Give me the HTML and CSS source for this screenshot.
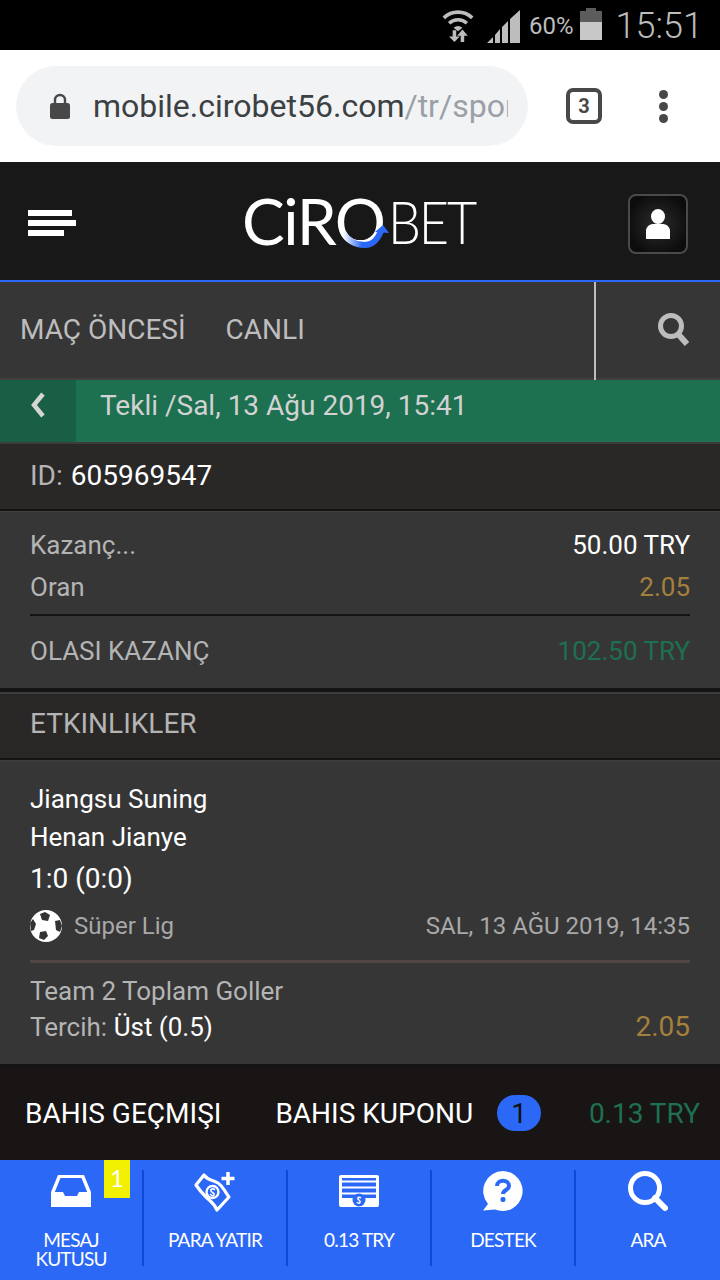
FILE: index.html
```html
<!DOCTYPE html>
<html lang="tr">
<head>
<meta charset="utf-8">
<title>Cirobet</title>
<link rel="stylesheet" href="styles.css">
</head>
<body>
<div class="phone">
  <div class="status">
    <svg class="st-wifi" width="32" height="34" viewBox="0 0 36 38">
      <path d="M2 11 A23 23 0 0 1 34 11" fill="none" stroke="#bdbdbd" stroke-width="4"/>
      <path d="M8 17 A15 15 0 0 1 28 17" fill="none" stroke="#bdbdbd" stroke-width="4"/>
      <path d="M13 22 A8 8 0 0 1 23 22 L18 26Z" fill="#bdbdbd"/>
      <path d="M12 25H16V32H20L14 38 8 32H12Z" fill="#bdbdbd"/>
      <path d="M21 38H25V31H29L23 24 17 31H21Z" fill="#bdbdbd"/>
    </svg>
    <svg class="st-signal" width="33" height="33" viewBox="0 0 33 33">
      <path d="M0 33 6 27V33ZM8 33V25L13 19V33ZM15 33V17L21 11V33ZM23 33V9L33 0V33Z" fill="#bdbdbd"/>
    </svg>
    <span class="st-pct">60%</span>
    <div class="st-batt"><div class="st-batt-cap"></div><div class="st-batt-empty"></div><div class="st-batt-fill"></div></div>
    <span class="st-time">15:51</span>
  </div>

  <div class="chrome">
    <div class="urlbar">
      <svg class="lock" width="20" height="26" viewBox="0 0 20 26">
        <path d="M5 11V7a5 5 0 0 1 10 0v4" fill="none" stroke="#484848" stroke-width="2.4"/>
        <rect x="0" y="10" width="20" height="16" rx="2.5" fill="#484848"/>
      </svg>
      <div class="url"><span class="url-host">mobile.cirobet56.com</span><span class="url-path">/tr/spor</span></div>
    </div>
    <div class="tabcount">3</div>
    <div class="dots"><i></i><i></i><i></i></div>
  </div>

  <header class="head">
    <div class="burger"><i class="b1"></i><i class="b2"></i><i class="b3"></i></div>
    <div class="logo">
      <span class="logo-text">CiRO</span><span class="logo-text logo-bet">BET</span>
      <svg class="logo-arc" width="54" height="32" viewBox="0 0 54 32">
        <defs><linearGradient id="arcg" x1="0" x2="1" y1="0" y2="0"><stop offset="0" stop-color="#ffffff"/><stop offset=".5" stop-color="#2b68f6"/></linearGradient></defs>
        <path d="M5 14 C10 24 18 27 27 27 C34 27 39 23 43 13" fill="none" stroke="url(#arcg)" stroke-width="6"/>
        <path d="M37 14 45 7 51 15Z" fill="#2b68f6"/>
      </svg>
    </div>
    <button class="userbtn">
      <svg width="24" height="30" viewBox="0 0 24 30"><ellipse cx="12" cy="7.5" rx="7" ry="7.5" fill="#fff"/><path d="M0 30V21a7 7 0 0 1 7-6h10a7 7 0 0 1 7 6v9Z" fill="#fff"/></svg>
    </button>
  </header>

  <nav class="nav">
    <div class="nav-links"><span>MAÇ ÖNCESİ</span><span>CANLI</span></div>
    <div class="nav-search">
      <svg width="32" height="34" viewBox="0 0 32 34"><circle cx="13" cy="13" r="10.5" fill="none" stroke="#bdbdbd" stroke-width="5"/><path d="M20 21 29 31" stroke="#bdbdbd" stroke-width="6"/></svg>
    </div>
  </nav>

  <div class="greenbar">
    <div class="back"><svg width="16" height="26" viewBox="0 0 16 26"><path d="M13 2 4 13 13 24" fill="none" stroke="#d5d5d5" stroke-width="4.5"/></svg></div>
    <div class="greentext">Tekli /Sal, 13 Ağu 2019, 15:41</div>
  </div>

  <div class="idrow">ID: <b>605969547</b></div>

  <section class="summary">
    <div class="row r-win"><span>Kazanç...</span><span class="white">50.00 TRY</span></div>
    <div class="row r-odd"><span>Oran</span><span class="gold">2.05</span></div>
    <div class="row r-pot"><span>OLASI KAZANÇ</span><span class="green">102.50 TRY</span></div>
  </section>

  <div class="etk">ETKINLIKLER</div>

  <section class="event">
    <div class="team t1">Jiangsu Suning</div>
    <div class="team t2">Henan Jianye</div>
    <div class="team t3">1:0 (0:0)</div>
    <div class="league">
      <div class="league-l">
        <svg width="32" height="32" viewBox="0 0 32 32">
          <circle cx="16" cy="16" r="16" fill="#fff"/>
          <path d="M10 4 15 2 20 5 18 11 12 10Z" fill="#333"/>
          <path d="M10 22 16 21 18 26 14 30 9 28Z" fill="#333"/>
          <path d="M25 11 30 10 32 16 30 22 26 20Z" fill="#333"/>
          <path d="M0 13 3 9 6 14 4 20 1 21Z" fill="#333"/>
        </svg>
        <span>Süper Lig</span>
      </div>
      <span class="league-date">SAL, 13 AĞU 2019, 14:35</span>
    </div>
    <div class="divider"></div>
    <div class="market">Team 2 Toplam Goller</div>
    <div class="pick"><span>Tercih: <b>Üst (0.5)</b></span><span class="gold pick-odd">2.05</span></div>
  </section>

  <div class="betbar">
    <span class="bb-hist">BAHIS GEÇMIŞI</span>
    <span class="bb-slip">BAHIS KUPONU</span>
    <span class="bb-count">1</span>
    <span class="bb-bal">0.13 TRY</span>
  </div>

  <footer class="tabs">
    <div class="tab">
      <span class="badge">1</span>
      <svg class="ic" width="40" height="42" viewBox="0 0 40 42"><path fill-rule="evenodd" d="M7 4H33L40 21V36H0V21ZM9.500 7 3.800 21H12L14 25H26L28 21H36.200L30.500 7Z" fill="#fff"/></svg>
      <span class="lbl">MESAJ<br>KUTUSU</span>
    </div>
    <div class="tab">
      <svg class="ic" width="42" height="42" viewBox="0 0 42 42">
        <path d="M2 14 10 4C14 10 18 8 24 12S30 20 35 26L23 39C20 32 16 30 12 26S6 20 2 14Z" fill="none" stroke="#fff" stroke-width="3.200" stroke-linejoin="round"/>
        <circle cx="18.500" cy="21" r="6" fill="none" stroke="#fff" stroke-width="2.400"/>
        <path d="M21 19C19 17 16 18 17 20S21 22 20 24 17 24 16 23" fill="none" stroke="#fff" stroke-width="1.600"/>
        <path d="M34 1V14M27.500 7.500H40.500" stroke="#fff" stroke-width="3.500"/>
      </svg>
      <span class="lbl">PARA YATIR</span>
    </div>
    <div class="tab">
      <svg class="ic" width="40" height="42" viewBox="0 0 40 42">
        <rect x="0" y="4" width="40" height="32" rx="2" fill="#fff"/>
        <rect x="3" y="7" width="34" height="20" fill="#2b68f6"/>
        <path d="M3 10.500H37M3 16.500H37M3 22.500H37" stroke="#fff" stroke-width="1.800"/>
        <circle cx="20" cy="29" r="6.500" fill="#2b68f6"/>
        <path d="M22 27C20 25.500 18 26.500 19 28S22 30 21 31.500 18.500 32 18 31" fill="none" stroke="#fff" stroke-width="1.400"/>
      </svg>
      <span class="lbl">0.13 TRY</span>
    </div>
    <div class="tab">
      <svg class="ic" width="40" height="42" viewBox="0 0 40 42">
        <path d="M20 0A20 20 0 1 1 12 38.500L0 39.500L5 33A20 20 0 0 1 20 0Z" fill="#fff"/>
        <path d="M14 15C14 8 26 8 26 15C26 19 20 19 20 23" fill="none" stroke="#2b68f6" stroke-width="4"/>
        <rect x="17.500" y="26" width="5" height="5" rx="2" fill="#2b68f6"/>
      </svg>
      <span class="lbl">DESTEK</span>
    </div>
    <div class="tab">
      <svg class="ic" width="40" height="42" viewBox="0 0 40 42"><circle cx="17" cy="17" r="14.500" fill="none" stroke="#fff" stroke-width="5"/><path d="M27 27 37 37" stroke="#fff" stroke-width="6" stroke-linecap="round"/></svg>
      <span class="lbl">ARA</span>
    </div>
  </footer>
</div>
</body>
</html>
```

FILE: styles.css
```css
* { box-sizing: border-box; }
html, body { margin: 0; padding: 0; }
body { background: #363636; font-family: Roboto, "Liberation Sans", sans-serif; }
.phone { width: 720px; height: 1280px; overflow: hidden; display: flex; flex-direction: column; }

.status { height: 50px; background: #000; display: flex; align-items: center; justify-content: flex-end; padding-right: 17px; flex: none; color: #bdbdbd; }
.st-wifi { margin-right: 13px; }
.st-signal { margin-right: 9px; margin-top: 3px; }
.st-pct { font-size: 24px; margin-right: 6px; margin-top: 2px; }
.st-batt { width: 22px; height: 32px; display: flex; flex-direction: column; align-items: center; margin-right: 14px; margin-bottom: 3px; }
.st-batt-cap { width: 10px; height: 3px; background: #5c5c5c; }
.st-batt-empty { width: 22px; height: 11px; background: #5c5c5c; }
.st-batt-fill { width: 22px; height: 18px; background: #c8c8c8; }
.st-time { font-size: 36px; font-weight: 300; margin-top: 1px; }

.chrome { height: 112px; background: #fff; display: flex; align-items: center; flex: none; padding: 0 0 0 16px; }
.urlbar { width: 512px; height: 80px; border-radius: 40px; background: #f1f3f4; display: flex; align-items: center; padding: 0 20px 0 34px; }
.lock { flex: none; margin-right: 23px; margin-top: -1px; }
.url { font-size: 32px; white-space: nowrap; overflow: hidden; flex: 1; }
.url-host { color: #3c4043; }
.url-path { color: #9aa0a6; }
.tabcount { width: 36px; height: 36px; margin-left: 38px; border: 4px solid #484848; border-radius: 7px; color: #484848; font-size: 20px; font-weight: 700; display: flex; align-items: center; justify-content: center; }
.dots { margin-left: 57px; display: flex; flex-direction: column; gap: 3px; }
.dots i { display: block; width: 9px; height: 9px; border-radius: 50%; background: #484848; }

.head { height: 120px; background: #181818; border-bottom: 2px solid #2b68f6; display: flex; align-items: center; justify-content: space-between; padding: 6px 32px 0 28px; flex: none; position: relative; }
.burger { display: flex; flex-direction: column; gap: 4px; margin-top: -2px; }
.burger i { display: block; height: 6px; background: #fff; }
.b1 { width: 44px; }
.b2 { width: 48px; }
.b3 { width: 36px; }
.logo { position: absolute; left: 242px; top: 26px; width: 236px; height: 66px; display: flex; align-items: center; font-family: Lato, sans-serif; font-weight: 400; color: #fff; }
.logo-text { font-size: 64px; line-height: 66px; letter-spacing: -1.5px; }
.logo-bet { font-size: 60px; font-weight: 300; letter-spacing: -2.5px; margin-left: 3px; display: inline-block; transform: scaleX(0.87); transform-origin: left center; }
.logo-arc { position: absolute; left: 96px; top: 30px; }
.userbtn { width: 60px; height: 60px; border: 2px solid #4a4a4a; border-radius: 8px; background: radial-gradient(circle, #2c2c2c 0, #0c0c0c 80%); display: flex; align-items: center; justify-content: center; padding: 0; }

.nav { height: 98px; background: #363636; border-bottom: 2px solid #41403f; display: flex; justify-content: space-between; flex: none; }
.nav-links { display: flex; align-items: center; gap: 40px; padding: 0 0 2px 20px; color: #bdbdbd; font-size: 28px; }
.nav-search { width: 126px; margin-bottom: -2px; border-left: 2px solid #bdbdbd; display: flex; align-items: center; justify-content: center; padding: 0 0 2px 32px; }

.greenbar { height: 64px; background: #1d7050; border-bottom: 2px solid #3c3c3c; display: flex; flex: none; }
.back { width: 76px; background: #195f45; display: flex; align-items: center; padding: 0 0 12px 30px; }
.greentext { padding: 0 0 12px 24px; font-size: 28px; color: #d2d2d2; display: flex; align-items: center; }

.idrow { height: 67px; background: #292827; border-bottom: 2px solid #141414; color: #b4b4b4; font-size: 28px; padding: 0 0 2px 30px; display: flex; align-items: center; gap: 1px; white-space: pre; flex: none; }
.idrow b { color: #fff; font-weight: 400; }

.summary { background: #363636; border-top: 1px solid #414141; border-bottom: 4px solid #141414; height: 181px; padding: 0 30px; flex: none; }
.row { display: flex; justify-content: space-between; color: #b4b4b4; font-size: 26px; line-height: 30px; }
.r-win { padding-top: 18px; }
.r-odd { padding-top: 12px; padding-bottom: 12px; border-bottom: 2px solid #141414; }
.r-pot { padding-top: 20px; }
.white { color: #fff; }
.gold { color: #a5803c; }
.green { color: #1d7050; }

.etk { height: 68px; background: #292827; border-top: 2px solid #3c3c3c; border-bottom: 2px solid #141414; color: #b4b4b4; font-size: 28px; padding: 0 0 6px 30px; display: flex; align-items: center; flex: none; }

.event { background: #363636; height: 308px; padding: 22px 30px 0; border-top: 2px solid #3c3c3c; border-bottom: 4px solid #141414; flex: none; }
.team { color: #fff; font-size: 26px; line-height: 30px; }
.t2 { margin-top: 8px; }
.t3 { margin-top: 12px; font-size: 28px; }
.league { display: flex; justify-content: space-between; align-items: center; margin-top: 16px; color: #a8a8a8; font-size: 24px; height: 32px; }
.league-l { display: flex; align-items: center; gap: 12px; }
.divider { height: 3px; background: #534545; margin-top: 18px; }
.market { color: #b4b4b4; font-size: 26px; line-height: 30px; margin-top: 13px; }
.pick { display: flex; justify-content: space-between; color: #b4b4b4; font-size: 26px; line-height: 30px; margin-top: 6px; }
.pick b { color: #fff; font-weight: 400; }
.pick-odd { font-size: 28px; }

.betbar { height: 92px; background: #191514; display: flex; align-items: center; color: #fff; font-size: 28px; padding: 0 20px 2px 25px; flex: none; }
.bb-hist { margin-right: 54px; }
.bb-slip { margin-right: 24px; }
.bb-count { width: 44px; height: 36px; border-radius: 18px; background: #2b68f6; color: #111; font-size: 28px; display: flex; align-items: center; justify-content: center; }
.bb-bal { margin-left: auto; color: #1d7050; }

.tabs { height: 120px; background: #2b68f6; display: flex; padding-top: 10px; flex: none; }
.tab { position: relative; width: 144px; height: 96px; border-right: 2px solid #0e49d8; display: flex; flex-direction: column; align-items: center; color: #fff; font-family: Lato, sans-serif; font-size: 19px; letter-spacing: -0.8px; line-height: 19px; text-align: center; }
.tab:last-child { border-right: 0; }
.ic { margin-top: 1px; margin-bottom: 17px; flex: none; }
.lbl { display: block; }
.badge { position: absolute; left: 104px; top: -10px; width: 26px; height: 38px; background: #f0f000; color: #fff; font-size: 24px; line-height: 36px; letter-spacing: 0; }
```
